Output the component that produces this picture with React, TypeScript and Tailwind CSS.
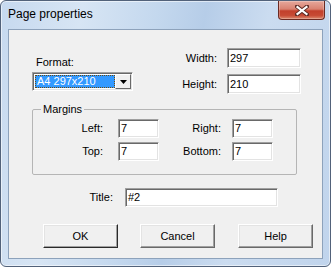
import type { ReactNode } from "react";

function Field({ value, className }: { value: string; className: string }) {
  return (
    <div
      className={
        "flex items-center border border-t-[#a0a0a0] border-l-[#a0a0a0] border-b-white border-r-white bg-white pl-[2px] text-[11px] leading-[13px] text-black shadow-[inset_1px_1px_0_#696969,inset_-1px_-1px_0_#e3e3e3] " +
        className
      }
    >
      {value}
    </div>
  );
}

function Btn({ children, dark }: { children: ReactNode; dark?: boolean }) {
  return (
    <div
      className={
        "flex h-[24px] w-[75px] items-center justify-center border border-t-white border-l-white bg-[#f0f0f0] text-[11px] text-black shadow-[inset_-1px_-1px_0_#a0a0a0,inset_1px_1px_0_#e3e3e3] " +
        (dark ? "border-b-[#2a2a2a] border-r-[#2a2a2a]" : "border-b-[#696969] border-r-[#696969]")
      }
    >
      {children}
    </div>
  );
}

function Label({ children, className }: { children: ReactNode; className: string }) {
  return <span className={"text-right text-[11px] leading-[13px] text-black " + className}>{children}</span>;
}

export default function App() {
  return (
    <div className="h-[267px] w-[331px] font-['Liberation_Sans',Arial,sans-serif]">
      <div className="flex h-full w-full flex-col rounded-[6px] border border-[#52627a] bg-[linear-gradient(100deg,#c6d9ef_0%,#d7e5f4_22%,#c4d8ee_42%,#b6cde8_55%,#cbdcf0_72%,#c0d4ec_100%)] shadow-[inset_0_0_0_1px_rgba(255,255,255,0.55)]">
        {/* title bar */}
        <div className="flex h-[28px] items-start">
          <span className="pl-[7px] pt-[6px] text-[12px] leading-[15px] text-black">Page properties</span>
          <div className="ml-auto mr-[5px] flex h-[19px] w-[47px] items-center justify-center rounded-b-[4px] border border-t-0 border-[#6b2a22] bg-[linear-gradient(180deg,#e6a89c_0%,#d98170_45%,#c2402c_55%,#c74a34_80%,#dc8a6f_100%)] shadow-[inset_0_0_0_1px_rgba(255,255,255,0.25)]">
            <svg width="14" height="11" viewBox="0 0 14 11">
              <path d="M2 1.5 L12 9.5 M12 1.5 L2 9.5" stroke="#5b2a24" strokeWidth="4" strokeLinecap="square" />
              <path d="M2.5 2 L11.5 9 M11.5 2 L2.5 9" stroke="#ffffff" strokeWidth="2.2" strokeLinecap="square" />
            </svg>
          </div>
        </div>

        {/* client area */}
        <div className="mx-[7px] h-[230px] border border-[#8da2bb] bg-[#f0f0f0]">
          {/* top section */}
          <div className="flex pt-[18px]">
            <div className="ml-[23px] mt-[8px] flex flex-col">
              <span className="pl-[4px] text-[11px] leading-[13px] text-black">Format:</span>
              <div className="mt-[3px] flex h-[19px] w-[101px] items-center border border-t-[#a0a0a0] border-l-[#a0a0a0] border-b-white border-r-white bg-white shadow-[inset_1px_1px_0_#696969,inset_-1px_-1px_0_#e3e3e3]">
                <div className="ml-[2px] flex h-[13px] w-[80px] items-center border border-dotted border-[#6b4a10] bg-[#3399ff] pl-[1px] text-[11px] leading-[11px] text-white">
                  A4 297x210
                </div>
                <div className="ml-auto mr-[1px] flex h-[15px] w-[16px] items-center justify-center border border-t-white border-l-white border-b-[#696969] border-r-[#696969] bg-[#f0f0f0]">
                  <svg width="7" height="4" viewBox="0 0 7 4">
                    <path d="M0 0 H7 L3.5 4 Z" fill="#000" />
                  </svg>
                </div>
              </div>
            </div>
            <div className="ml-auto mr-[21px] flex flex-col gap-[6px]">
              <div className="flex items-center">
                <Label className="w-[60px]">Width:</Label>
                <Field value="297" className="ml-[10px] h-[20px] w-[74px]" />
              </div>
              <div className="flex items-center">
                <Label className="w-[60px]">Height:</Label>
                <Field value="210" className="ml-[10px] h-[20px] w-[74px]" />
              </div>
            </div>
          </div>

          {/* margins group */}
          <fieldset className="ml-[23px] mt-[9px] h-[72px] w-[265px] rounded-[2px] border border-[#b5b5b5]">
            <legend className="ml-[8px] px-[2px] text-[11px] leading-[13px] text-black">Margins</legend>
            <div className="mt-[3px] flex items-center">
              <Label className="w-[70px]">Left:</Label>
              <Field value="7" className="ml-[15px] h-[19px] w-[41px]" />
              <Label className="w-[62px]">Right:</Label>
              <Field value="7" className="ml-[11px] h-[19px] w-[41px]" />
            </div>
            <div className="mt-[4px] flex items-center">
              <Label className="w-[70px]">Top:</Label>
              <Field value="7" className="ml-[15px] h-[19px] w-[41px]" />
              <Label className="w-[62px]">Bottom:</Label>
              <Field value="7" className="ml-[11px] h-[19px] w-[41px]" />
            </div>
          </fieldset>

          {/* title row */}
          <div className="mt-[13px] flex items-center">
            <Label className="w-[104px]">Title:</Label>
            <Field value="#2" className="ml-[12px] h-[19px] w-[153px]" />
          </div>

          {/* buttons */}
          <div className="mt-[17px] flex pl-[34px]">
            <Btn dark>OK</Btn>
            <div className="ml-[22px]">
              <Btn>Cancel</Btn>
            </div>
            <div className="ml-[23px]">
              <Btn>Help</Btn>
            </div>
          </div>
        </div>
      </div>
    </div>
  );
}
